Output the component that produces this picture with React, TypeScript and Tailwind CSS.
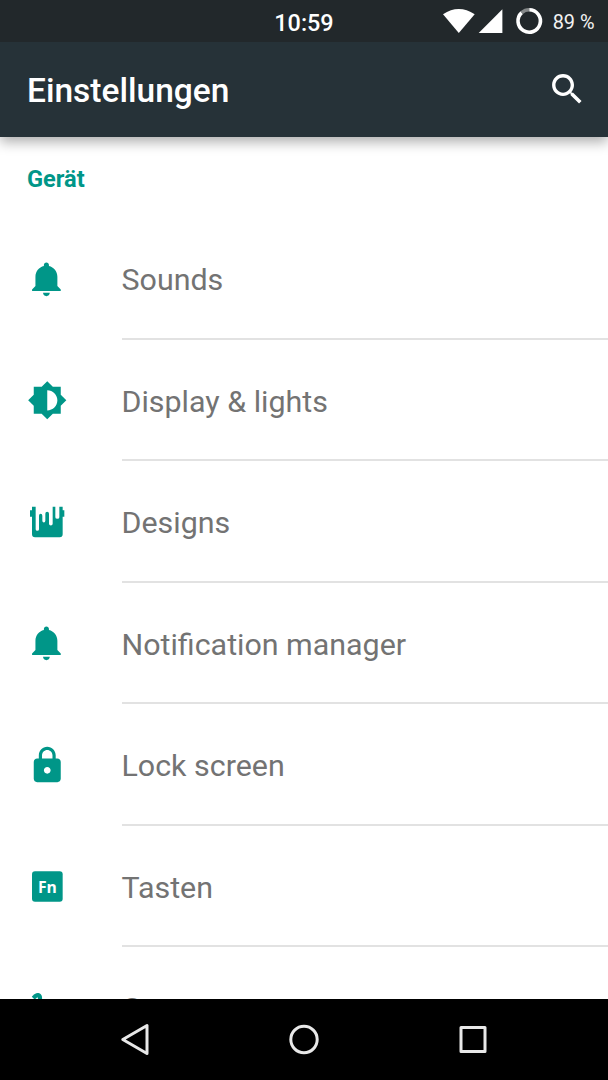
import type { ReactNode } from "react";

const Material = ({ d }: { d: string }) => (
  <svg viewBox="0 0 24 24" className="size-[40.5px] shrink-0" fill="currentColor">
    <path d={d} />
  </svg>
);

const BELL =
  "M11.5 22c1.1 0 2-.9 2-2h-4c0 1.1.9 2 2 2zm6.5-6v-5.5c0-3.07-2.13-5.64-5-6.32V3.5c0-.83-.67-1.5-1.5-1.5S10 2.67 10 3.5v.68c-2.87.68-5 3.25-5 6.32V16l-2 2v1h17v-1l-2-2z";
const BRIGHTNESS =
  "M20 15.31L23.31 12 20 8.69V4h-4.69L12 .69 8.69 4H4v4.69L.69 12 4 15.31V20h4.69L12 23.31 15.31 20H20v-4.69zM12 18V6c3.31 0 6 2.69 6 6s-2.69 6-6 6z";
const LOCK =
  "M18 8h-1V6c0-2.76-2.24-5-5-5S7 3.24 7 6v2H6c-1.1 0-2 .9-2 2v10c0 1.1.9 2 2 2h12c1.1 0 2-.9 2-2V10c0-1.1-.9-2-2-2zm-6 9c-1.1 0-2-.9-2-2s.9-2 2-2 2 .9 2 2-.9 2-2 2zm3.1-9H8.9V6c0-1.71 1.39-3.1 3.1-3.1s3.1 1.39 3.1 3.1v2z";
const GESTURE =
  "M4.59 6.89c.7-.71 1.4-1.35 1.71-1.22.5.2 0 1.03-.3 1.52-.25.42-2.86 3.89-2.86 6.31 0 1.28.48 2.34 1.34 2.98.75.56 1.74.73 2.64.46 1.07-.31 1.95-1.4 3.06-2.77 1.21-1.49 2.83-3.44 4.08-3.44 1.63 0 1.65 1.01 1.76 1.79-3.78.64-5.38 3.67-5.38 5.37 0 1.7 1.44 3.09 3.21 3.09 1.63 0 4.29-1.33 4.69-6.1H21v-2.5h-2.47c-.15-1.65-1.09-4.2-4.03-4.2-2.25 0-4.18 1.91-4.94 2.84-.58.73-2.06 2.48-2.29 2.72-.25.3-.68.84-1.11.84-.45 0-.72-.83-.36-1.92.35-1.09 1.4-2.86 1.85-3.52.78-1.14 1.3-1.92 1.3-3.28C8.95 3.69 7.31 3 6.44 3 5.12 3 3.97 4 3.72 4.25c-.36.36-.66.66-.88.93l1.75 1.71z";
const SEARCH =
  "M15.5 14h-.79l-.28-.27C15.41 12.59 16 11.11 16 9.5 16 5.91 13.09 3 9.5 3S3 5.91 3 9.5 5.91 16 9.5 16c1.61 0 3.09-.59 4.23-1.57l.27.28v.79l5 4.99L20.49 19l-4.99-5zm-6 0C7.01 14 5 11.99 5 9.5S7.01 5 9.5 5 14 7.01 14 9.5 11.99 14 9.5 14z";

const PaintIcon = () => (
  <svg viewBox="51 35.500 121.5 121.5" className="size-[40.5px] shrink-0" fill="currentColor">
    <path d="M66 50H77V117Q77 122 82 122T87 117V77Q87 71 92 71T97 77V92Q97 97 101.500 97T106 92V71Q106 65 111.500 65T117 71V101Q117 106 122.500 106T128 101V50H136V81Q136 86 142 86T148 81V50H158V60H163V80H158V132Q158 141 149 141H75Q66 141 66 132V80H60V60H66Z" />
  </svg>
);

const FnIcon = () => (
  <svg viewBox="51 18.500 121.5 121.5" className="size-[40.5px] shrink-0">
    <rect x="66" y="34" width="92" height="92" rx="9" fill="currentColor" />
    <text x="112" y="98.500" textAnchor="middle" fill="#fff" fontSize="47" fontWeight="700" fontFamily="Open Sans, sans-serif">
      Fn
    </text>
  </svg>
);

const items: { label: string; icon: ReactNode }[] = [
  { label: "Sounds", icon: <Material d={BELL} /> },
  { label: "Display & lights", icon: <Material d={BRIGHTNESS} /> },
  { label: "Designs", icon: <PaintIcon /> },
  { label: "Notification manager", icon: <Material d={BELL} /> },
  { label: "Lock screen", icon: <Material d={LOCK} /> },
  { label: "Tasten", icon: <FnIcon /> },
  { label: "Gesten", icon: <Material d={GESTURE} /> },
];

function StatusBar() {
  return (
    <div className="grid h-[42px] shrink-0 grid-cols-[1fr_auto_1fr] items-center bg-[#22282b] text-white">
      <span />
      <span className="pt-[5px] text-[23.4px] leading-none font-medium">10:59</span>
      <div className="flex h-full items-center justify-end pr-[13.500px]">
        <svg width="110" height="42" viewBox="0.8 0 110 42" fill="#fff">
          <path d="M.8 14.200Q16.500 3.800 32.500 14.200L16.600 33Z" />
          <path d="M60.200 9.300V33H36.500Z" />
          <path d="M87 9.800A11.200 11.200 0 1 1 79.500 12.700" fill="none" stroke="#fff" strokeWidth="3.600" />
          <path d="M79.500 12.700A11.200 11.200 0 0 1 87 9.800" fill="none" stroke="#858889" strokeWidth="3.600" />
        </svg>
        <span className="pt-[4px] text-[19.900px] leading-none whitespace-nowrap text-[#f2f2f2]">89 %</span>
      </div>
    </div>
  );
}

function NavBar() {
  return (
    <nav className="grid h-[81px] shrink-0 grid-cols-3 justify-items-center bg-black px-[50.500px]">
      <svg width="40" height="81" viewBox="0 0 40 81" fill="none" stroke="#e8e8e8" strokeWidth="3" strokeLinejoin="round">
        <path d="M7.800 40.500L32 26.500V54.500Z" />
      </svg>
      <svg width="40" height="81" viewBox="0 0 40 81" fill="none" stroke="#e8e8e8" strokeWidth="3">
        <circle cx="20" cy="40.500" r="13.200" />
      </svg>
      <svg width="40" height="81" viewBox="0 0 40 81" fill="none" stroke="#e8e8e8" strokeWidth="3" strokeLinejoin="round">
        <rect x="8" y="28.500" width="24" height="24" />
      </svg>
    </nav>
  );
}

export default function App() {
  return (
    <div className="flex h-[1080px] w-[608px] flex-col overflow-hidden bg-white font-['Roboto',sans-serif]">
      <div className="relative z-10 shrink-0 shadow-[0_5px_12px_rgba(0,0,0,0.32)]">
        <StatusBar />
        <header className="flex h-[95px] items-center justify-between bg-[#263238] pr-[21px] pl-[27px] text-white">
          <h1 className="pt-[3px] text-[33.5px] leading-none font-medium">Einstellungen</h1>
          <svg viewBox="0 0 24 24" className="size-[40.5px]" fill="currentColor">
            <path d={SEARCH} />
          </svg>
        </header>
      </div>
      <main className="min-h-0 flex-1 overflow-hidden">
        <h2 className="flex h-[81.3px] items-center pt-[5px] pl-[27px] text-[23.6px] font-bold text-[#009688]">Gerät</h2>
        <ul>
          {items.map(({ label, icon }) => (
            <li key={label} className="flex h-[121.5px] items-center pl-[27px] text-[#009688]">
              {icon}
              <div className="ml-[54px] flex h-full flex-1 items-center border-b-2 border-[#e2e2e2] pt-[4px] text-[30.4px] text-[#737373]">
                {label}
              </div>
            </li>
          ))}
        </ul>
      </main>
      <NavBar />
    </div>
  );
}
